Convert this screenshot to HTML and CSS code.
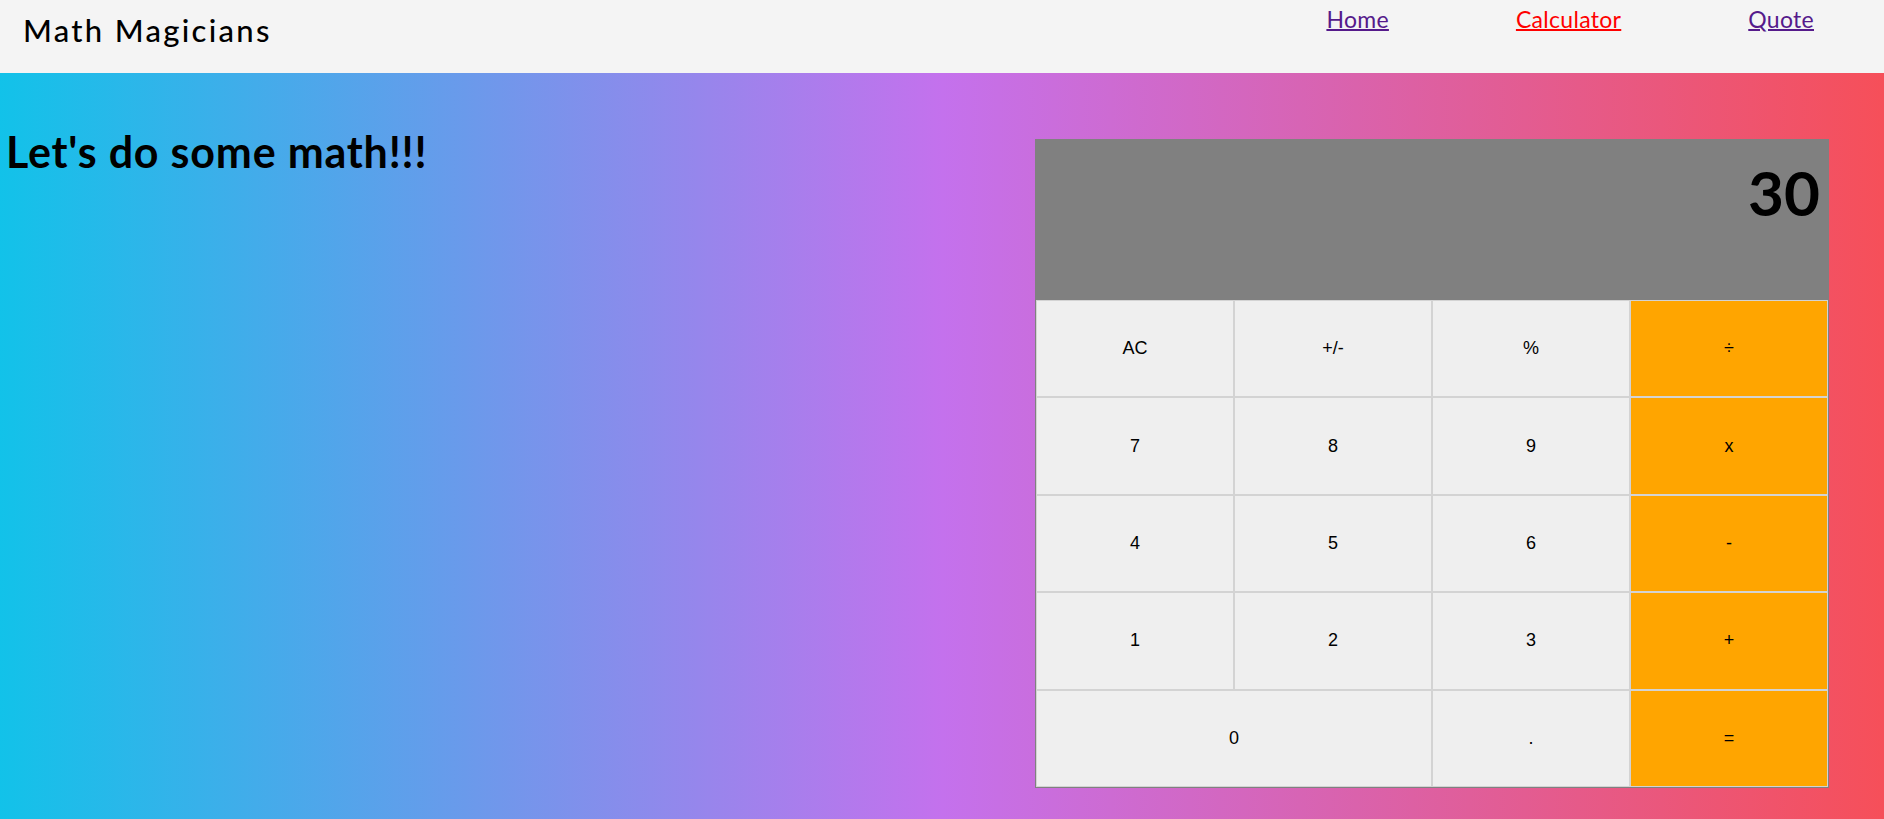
FILE: index.html
```html
<!DOCTYPE html>
<html lang="en">
<head>
<meta charset="utf-8">
<title>Math Magicians</title>
<link rel="stylesheet" href="styles.css">
</head>
<body>
<header class="topbar">
  <h1 class="brand">Math Magicians</h1>
  <nav class="nav">
    <a class="nav-link" href="#">Home</a>
    <a class="nav-link active" href="#">Calculator</a>
    <a class="nav-link" href="#">Quote</a>
  </nav>
</header>
<main class="page">
  <h2 class="title">Let's do some math!!!</h2>
  <div class="calc">
    <div class="display">30</div>
    <button class="key">AC</button>
    <button class="key">+/-</button>
    <button class="key">%</button>
    <button class="key op">÷</button>
    <button class="key">7</button>
    <button class="key">8</button>
    <button class="key">9</button>
    <button class="key op">x</button>
    <button class="key">4</button>
    <button class="key">5</button>
    <button class="key">6</button>
    <button class="key op">-</button>
    <button class="key">1</button>
    <button class="key">2</button>
    <button class="key">3</button>
    <button class="key op">+</button>
    <button class="key zero">0</button>
    <button class="key">.</button>
    <button class="key op">=</button>
  </div>
</main>
</body>
</html>
```
FILE: styles.css
```css
* { box-sizing: border-box; }

html, body {
  margin: 0;
  padding: 0;
  height: 100%;
}

body {
  font-family: Lato, "Noto Sans", sans-serif;
  background: linear-gradient(to right, #12c2e9, #c471ed, #f64f59);
  min-height: 819px;
}

.topbar {
  display: flex;
  justify-content: space-between;
  align-items: flex-start;
  height: 73px;
  background: #f4f4f4;
  padding: 0 70px 0 23px;
}

.brand {
  margin: 0;
  padding-top: 11px;
  font-size: 31px;
  font-weight: 500;
  letter-spacing: 2.3px;
  color: #000;
}

.nav {
  display: flex;
  gap: 127px;
  padding-top: 5px;
}

.nav-link {
  font-size: 23px;
  letter-spacing: 0.3px;
  color: #551a8b;
  text-decoration: underline;
  text-decoration-thickness: 2px;
}

.nav-link.active {
  color: #ff0000;
}

.page {
  display: flex;
  justify-content: space-between;
  align-items: flex-start;
  padding: 0 55px 0 6px;
}

.title {
  margin: 53px 0 0;
  font-size: 43px;
  font-weight: 700;
  letter-spacing: 0.8px;
  color: #000;
}

.calc {
  margin-top: 66px;
  width: 794px;
  display: grid;
  grid-template-columns: repeat(4, 1fr);
  grid-template-rows: 160px repeat(5, 97.4px);
  background: #808080;
  border: 1px solid #808080;
}

.display {
  grid-column: 1 / -1;
  background: #808080;
  text-align: right;
  padding: 15px 8px 0 0;
  font-size: 62px;
  font-weight: 700;
  color: #000;
}

.key {
  font-family: "Liberation Sans", Arial, sans-serif;
  font-size: 18px;
  color: #000;
  background: #efefef;
  border: 1px solid #d3d3d3;
  margin: 0;
  padding: 0;
}

.key.op {
  background: #ffa500;
}

.key.zero {
  grid-column: span 2;
}
```
